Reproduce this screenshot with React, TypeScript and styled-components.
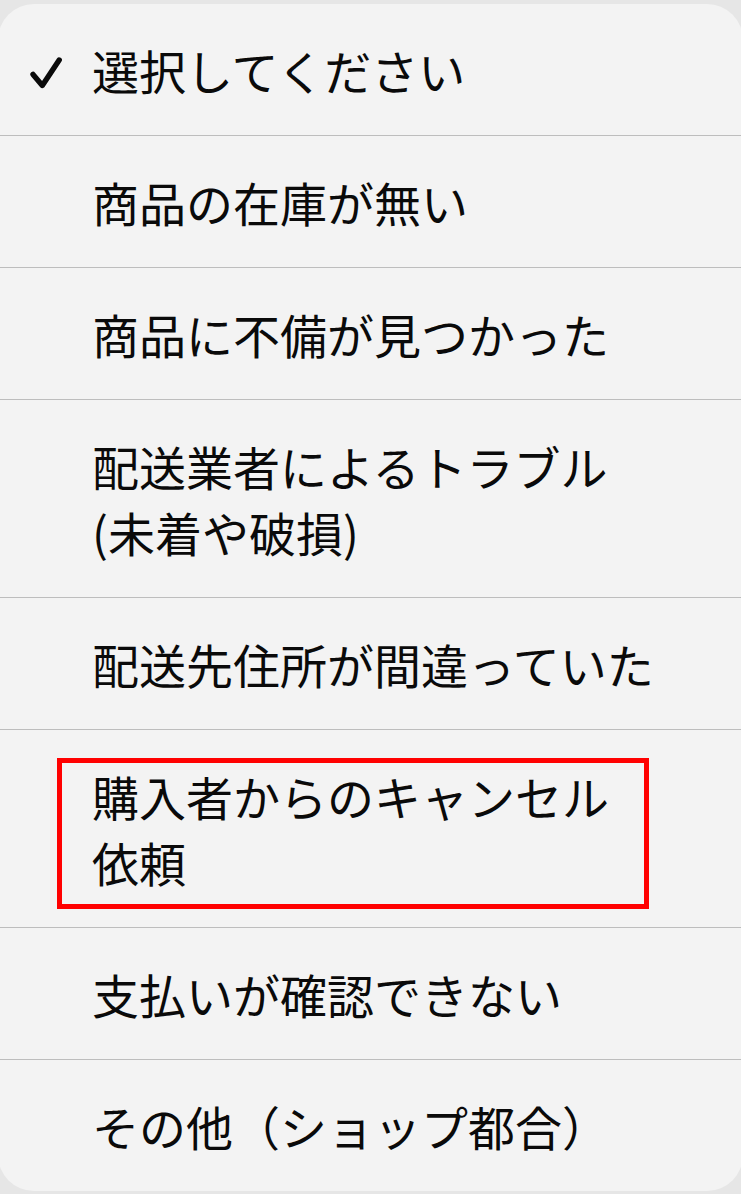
import React from 'react';
import styled, { createGlobalStyle } from 'styled-components';

const GlobalStyle = createGlobalStyle`
  html, body {
    margin: 0;
    padding: 0;
    background: #e6e6e6;
  }
  body {
    font-family: "Noto Sans CJK JP", "Noto Sans", sans-serif;
    -webkit-font-smoothing: antialiased;
  }
`;

const Page = styled.div`
  width: 741px;
  height: 1194px;
  padding-top: 4px;
  box-sizing: border-box;
  overflow: hidden;
`;

const Menu = styled.ul`
  list-style: none;
  margin: 0 -2px 0 -2px;
  padding: 0;
  background: #f3f3f3;
  border-radius: 36px;
  overflow: hidden;
`;

const Row = styled.li`
  display: grid;
  grid-template-columns: 94px 1fr;
  align-items: start;
  padding: 33px 0 32px;
  color: #0a0a0a;
  font-size: 47px;
  line-height: 66px;

  & + & {
    border-top: 1px solid #bdbdbd;
  }
`;

const CheckCell = styled.span`
  display: flex;
  align-items: flex-start;
  padding: 18px 0 0 27px;
  height: 66px;
  box-sizing: border-box;
`;

const Label = styled.span<{ $highlighted?: boolean }>`
  white-space: ${(p) => (p.$highlighted ? 'normal' : 'nowrap')};
  ${(p) =>
    p.$highlighted &&
    `
    display: inline-block;
    box-sizing: border-box;
    width: 592px;
    border: 5px solid #ff0000;
    padding: 0 30px 9px 30px;
    margin: -5px 0 -14px -35px;
  `}
`;

const Check = () => (
  <svg width="38" height="38" viewBox="0 0 45 45" fill="none">
    <path
      d="M9.5 23 L20.5 36 L40.5 6"
      stroke="#0a0a0a"
      strokeWidth="6.4"
      strokeLinecap="round"
      strokeLinejoin="round"
    />
  </svg>
);

type Option = {
  lines: string[];
  checked?: boolean;
  highlighted?: boolean;
};

const options: Option[] = [
  { lines: ['選択してください'], checked: true },
  { lines: ['商品の在庫が無い'] },
  { lines: ['商品に不備が見つかった'] },
  { lines: ['配送業者によるトラブル', '(未着や破損)'] },
  { lines: ['配送先住所が間違っていた'] },
  { lines: ['購入者からのキャンセル依頼'], highlighted: true },
  { lines: ['支払いが確認できない'] },
  { lines: ['その他（ショップ都合）'] },
];

export default function App() {
  return (
    <>
      <GlobalStyle />
      <Page>
        <Menu>
          {options.map((o, i) => (
            <Row key={i}>
              <CheckCell>{o.checked && <Check />}</CheckCell>
              <div>
                {o.highlighted ? (
                  <Label $highlighted>{o.lines[0]}</Label>
                ) : (
                  o.lines.map((l) => (
                    <div key={l}>
                      <Label>{l}</Label>
                    </div>
                  ))
                )}
              </div>
            </Row>
          ))}
        </Menu>
      </Page>
    </>
  );
}
